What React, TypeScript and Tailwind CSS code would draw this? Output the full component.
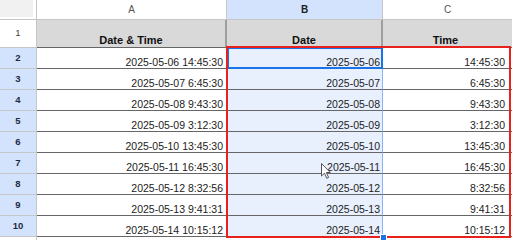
import React from "react";

const rows: [string, string, string][] = [
  ["2025-05-06 14:45:30", "2025-05-06", "14:45:30"],
  ["2025-05-07 6:45:30", "2025-05-07", "6:45:30"],
  ["2025-05-08 9:43:30", "2025-05-08", "9:43:30"],
  ["2025-05-09 3:12:30", "2025-05-09", "3:12:30"],
  ["2025-05-10 13:45:30", "2025-05-10", "13:45:30"],
  ["2025-05-11 16:45:30", "2025-05-11", "16:45:30"],
  ["2025-05-12 8:32:56", "2025-05-12", "8:32:56"],
  ["2025-05-13 9:41:31", "2025-05-13", "9:41:31"],
  ["2025-05-14 10:15:12", "2025-05-14", "10:15:12"],
];

export default function App() {
  return (
    <div
      className="relative w-[512px] h-[240px] overflow-hidden bg-white"
      style={{ fontFamily: '"Liberation Sans", Arial, sans-serif' }}
    >
      <div className="grid grid-cols-[37px_190px_156px_129px] grid-rows-[20px_28px_repeat(9,21px)_3px]">
        {/* column header row */}
        <div className="bg-white border-r border-b border-[#c4c7c5] pr-[3px] pb-[2px]">
          <div className="w-full h-full bg-[#f1f1f1]" />
        </div>
        <div className="bg-white border-r border-b border-[#c4c7c5] flex items-center justify-center text-[10px] text-[#555]">A</div>
        <div className="bg-[#d3e3fd] border-r border-b border-[#c4c7c5] flex items-center justify-center text-[10px] font-bold text-[#1f1f1f]">B</div>
        <div className="bg-white border-b border-[#c4c7c5] flex items-center justify-center text-[10px] text-[#555]">C</div>

        {/* row 1 */}
        <div className="bg-white border-r border-b border-[#c4c7c5] flex items-center justify-center text-[9.5px] text-[#444]">1</div>
        <div className="bg-[#d9d9d9] border-r-2 border-r-[#9e9e9e] border-b border-b-[#666] flex items-end justify-center pb-[1px] text-[11px] leading-[12px] font-bold text-[#111]">Date &amp; Time</div>
        <div className="bg-[#d9d9d9] border-r-2 border-r-[#9e9e9e] border-b border-b-[#666] flex items-end justify-center pb-[1px] text-[11px] leading-[12px] font-bold text-[#111]">Date</div>
        <div className="bg-[#d9d9d9] border-b border-b-[#666] flex items-end justify-center pb-[1px] pr-[4px] text-[11px] leading-[12px] font-bold text-[#111]">Time</div>

        {rows.map((r, i) => (
          <React.Fragment key={i}>
            <div className="bg-[#d3e3fd] border-r border-b border-[#c4c7c5] flex items-center justify-center text-[9.5px] font-bold text-[#1f2a44]">
              {i + 2}
            </div>
            <div className="bg-white border-r border-r-[#9e9e9e] border-b border-b-[#666] flex items-end justify-end pr-[3px] text-[10.5px] leading-[12px] text-[#222]">
              {r[0]}
            </div>
            <div className="bg-[#e8f0fe] border-r border-r-[#8ab4f8] border-b border-b-[#666] flex items-end justify-end pr-[2px] text-[10.5px] leading-[12px] text-[#222]">
              {r[1]}
            </div>
            <div className="bg-white border-b border-b-[#666] flex items-end justify-end pr-[7px] text-[10.5px] leading-[12px] text-[#222]">
              {r[2]}
            </div>
          </React.Fragment>
        ))}

        {/* partial row */}
        <div className="bg-white border-r border-[#c4c7c5]" />
        <div className="bg-white" />
        <div className="bg-white" />
        <div className="bg-white" />
      </div>

      {/* active cell border */}
      <div className="absolute left-[227px] top-[47px] w-[156px] h-[22px] border-2 border-[#1a73e8]" />

      {/* red highlight rectangle */}
      <div className="absolute left-[226px] top-[46px] w-[285px] h-[192px] border-2 border-[#e8211d]" />

      {/* fill handle */}
      <div className="absolute left-[380px] top-[234px] w-[7px] h-[7px] bg-[#1a73e8] border border-white" />

      {/* mouse cursor */}
      <svg
        className="absolute left-[321px] top-[163px]"
        width="11"
        height="17"
        viewBox="0 0 11 17"
      >
        <path
          d="M0.5 0.5 L0.5 13 L3.5 10.2 L5.7 15.3 L7.6 14.5 L5.4 9.5 L9.3 9.5 Z"
          fill="#ffffff"
          stroke="#555"
          strokeWidth="1"
          strokeLinejoin="round"
        />
      </svg>
    </div>
  );
}
